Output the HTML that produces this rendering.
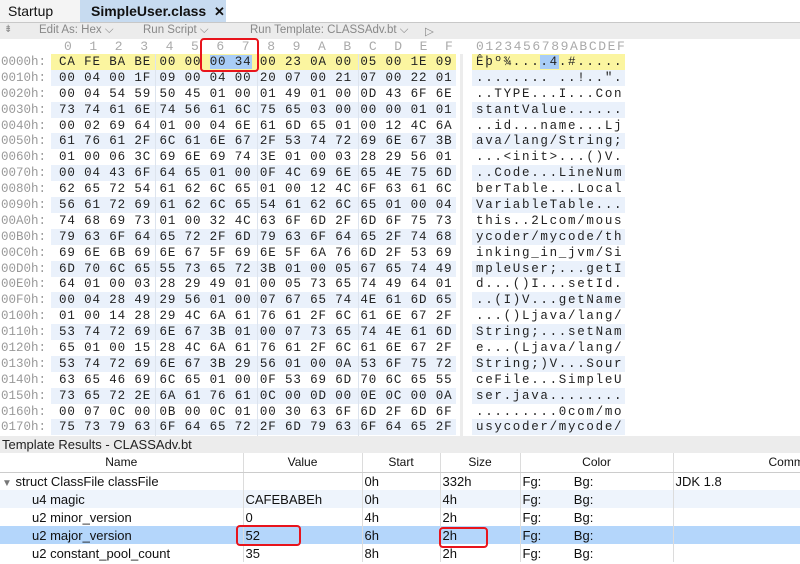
<!DOCTYPE html><html><head><meta charset="utf-8"><style>
*{margin:0;padding:0;box-sizing:border-box}
body{width:800px;height:564px;overflow:hidden;background:#fff;font-family:"Liberation Sans",sans-serif;font-size:13px;color:#111;position:relative}
.abs{position:absolute}
.tb{top:22px;left:0;width:800px;height:17px;background:#ececec;border-top:1px solid #c8c8c8;color:#888;font-size:11.5px}
.tb span{position:absolute;top:1px}
.hdr{position:absolute;top:39px;height:15px;color:#aaa;font-family:"Liberation Mono",monospace;font-size:13px;white-space:pre}
#hex div{height:15.9px;line-height:16px;font-family:"Liberation Mono",monospace;font-size:12.5px;white-space:pre;position:relative}
#hex .a{position:absolute;left:0;width:46px;text-align:right;color:#999}
#hex .h{position:absolute;left:51px;width:405px;padding-left:8px;letter-spacing:0.87px;color:#222}
#hex .s{position:absolute;left:472px;width:153px;padding-left:4px;letter-spacing:1.7px;color:#222;overflow:hidden}
.o .h,.o .s{background:#eaf1fb}
.y .h,.y .s{background:#fbf5a0}
.sel{background:#a9cdf7}
.vl{position:absolute;top:54px;width:1px;height:383px;background:#dde4ee}
table{border-collapse:collapse;position:absolute;left:0;top:453px;width:830px;table-layout:fixed}
td{height:18px;font-size:13px;padding:0 2px;border-right:1px solid #dcdcdc;white-space:nowrap;overflow:hidden}
th{height:19px;font-weight:normal;font-size:12px;border-right:1px solid #dcdcdc;border-bottom:1px solid #ccc;background:#fff}
.red{position:absolute;border:2.5px solid #e8141c;border-radius:4px}
</style></head><body>
<div class="abs" style="left:0;top:0;width:80px;height:22px;background:#f4f4f4;padding:3px 0 0 8px;font-size:14px">Startup</div>
<div class="abs" style="left:80px;top:0;width:146px;height:22px;background:#c7dbf0;padding:3px 0 0 11px;font-size:14px;font-weight:bold;white-space:nowrap">SimpleUser.class&nbsp;&nbsp;<span style="font-size:13px">✕</span></div>
<div class="abs tb">
 <span style="left:4px;font-size:10px">⇟</span>
 <span style="left:39px">Edit As: Hex ⌵</span>
 <span style="left:143px">Run Script ⌵</span>
 <span style="left:250px">Run Template: CLASSAdv.bt ⌵</span>
 <span style="left:425px">▷</span>
</div>
<div class="hdr" style="left:64px;letter-spacing:17.6px">0123456789ABCDEF</div>
<div class="hdr" style="left:476px;letter-spacing:1.6px">0123456789ABCDEF</div>
<div id="hex" class="abs" style="left:0;top:54px;width:800px">
<div class="y"><span class="a">0000h:</span><span class="h">CA FE BA BE 00 00 <span class="sel">00 34</span> 00 23 0A 00 05 00 1E 09</span><span class="s">Êþº¾...<span class="sel">.4</span>.#......</span></div>
<div class="o"><span class="a">0010h:</span><span class="h">00 04 00 1F 09 00 04 00 20 07 00 21 07 00 22 01</span><span class="s">........ ..!..".</span></div>
<div><span class="a">0020h:</span><span class="h">00 04 54 59 50 45 01 00 01 49 01 00 0D 43 6F 6E</span><span class="s">..TYPE...I...Con</span></div>
<div class="o"><span class="a">0030h:</span><span class="h">73 74 61 6E 74 56 61 6C 75 65 03 00 00 00 01 01</span><span class="s">stantValue......</span></div>
<div><span class="a">0040h:</span><span class="h">00 02 69 64 01 00 04 6E 61 6D 65 01 00 12 4C 6A</span><span class="s">..id...name...Lj</span></div>
<div class="o"><span class="a">0050h:</span><span class="h">61 76 61 2F 6C 61 6E 67 2F 53 74 72 69 6E 67 3B</span><span class="s">ava/lang/String;</span></div>
<div><span class="a">0060h:</span><span class="h">01 00 06 3C 69 6E 69 74 3E 01 00 03 28 29 56 01</span><span class="s">...&lt;init&gt;...()V.</span></div>
<div class="o"><span class="a">0070h:</span><span class="h">00 04 43 6F 64 65 01 00 0F 4C 69 6E 65 4E 75 6D</span><span class="s">..Code...LineNum</span></div>
<div><span class="a">0080h:</span><span class="h">62 65 72 54 61 62 6C 65 01 00 12 4C 6F 63 61 6C</span><span class="s">berTable...Local</span></div>
<div class="o"><span class="a">0090h:</span><span class="h">56 61 72 69 61 62 6C 65 54 61 62 6C 65 01 00 04</span><span class="s">VariableTable...</span></div>
<div><span class="a">00A0h:</span><span class="h">74 68 69 73 01 00 32 4C 63 6F 6D 2F 6D 6F 75 73</span><span class="s">this..2Lcom/mous</span></div>
<div class="o"><span class="a">00B0h:</span><span class="h">79 63 6F 64 65 72 2F 6D 79 63 6F 64 65 2F 74 68</span><span class="s">ycoder/mycode/th</span></div>
<div><span class="a">00C0h:</span><span class="h">69 6E 6B 69 6E 67 5F 69 6E 5F 6A 76 6D 2F 53 69</span><span class="s">inking_in_jvm/Si</span></div>
<div class="o"><span class="a">00D0h:</span><span class="h">6D 70 6C 65 55 73 65 72 3B 01 00 05 67 65 74 49</span><span class="s">mpleUser;...getI</span></div>
<div><span class="a">00E0h:</span><span class="h">64 01 00 03 28 29 49 01 00 05 73 65 74 49 64 01</span><span class="s">d...()I...setId.</span></div>
<div class="o"><span class="a">00F0h:</span><span class="h">00 04 28 49 29 56 01 00 07 67 65 74 4E 61 6D 65</span><span class="s">..(I)V...getName</span></div>
<div><span class="a">0100h:</span><span class="h">01 00 14 28 29 4C 6A 61 76 61 2F 6C 61 6E 67 2F</span><span class="s">...()Ljava/lang/</span></div>
<div class="o"><span class="a">0110h:</span><span class="h">53 74 72 69 6E 67 3B 01 00 07 73 65 74 4E 61 6D</span><span class="s">String;...setNam</span></div>
<div><span class="a">0120h:</span><span class="h">65 01 00 15 28 4C 6A 61 76 61 2F 6C 61 6E 67 2F</span><span class="s">e...(Ljava/lang/</span></div>
<div class="o"><span class="a">0130h:</span><span class="h">53 74 72 69 6E 67 3B 29 56 01 00 0A 53 6F 75 72</span><span class="s">String;)V...Sour</span></div>
<div><span class="a">0140h:</span><span class="h">63 65 46 69 6C 65 01 00 0F 53 69 6D 70 6C 65 55</span><span class="s">ceFile...SimpleU</span></div>
<div class="o"><span class="a">0150h:</span><span class="h">73 65 72 2E 6A 61 76 61 0C 00 0D 00 0E 0C 00 0A</span><span class="s">ser.java........</span></div>
<div><span class="a">0160h:</span><span class="h">00 07 0C 00 0B 00 0C 01 00 30 63 6F 6D 2F 6D 6F</span><span class="s">.........0com/mo</span></div>
<div class="o"><span class="a">0170h:</span><span class="h">75 73 79 63 6F 64 65 72 2F 6D 79 63 6F 64 65 2F</span><span class="s">usycoder/mycode/</span></div>
</div>
<div class="vl" style="left:155px"></div><div class="vl" style="left:257px"></div><div class="vl" style="left:358px"></div>
<div class="abs" style="left:460px;top:54px;width:3px;height:383px;background:#ececec"></div>
<div class="abs" style="left:0;top:436px;width:800px;height:17px;background:#ececec;padding:1px 0 0 2px;font-size:13px;color:#222">Template Results - CLASSAdv.bt</div>
<table>
<colgroup><col style="width:243px"><col style="width:119px"><col style="width:78px"><col style="width:80px"><col style="width:153px"><col style="width:157px"></colgroup>
<tr><th>Name</th><th>Value</th><th>Start</th><th>Size</th><th>Color</th><th style="text-align:left;padding-left:95px">Comm</th></tr>
<tr><td><span style="color:#777;font-size:10px">▼</span> struct ClassFile classFile</td><td></td><td>0h</td><td>332h</td><td>Fg:&nbsp;&nbsp;&nbsp;&nbsp;&nbsp;&nbsp;&nbsp;&nbsp;&nbsp;Bg:</td><td>JDK 1.8</td></tr>
<tr style="background:#eef4fc"><td style="padding-left:32px">u4 magic</td><td>CAFEBABEh</td><td>0h</td><td>4h</td><td>Fg:&nbsp;&nbsp;&nbsp;&nbsp;&nbsp;&nbsp;&nbsp;&nbsp;&nbsp;Bg:</td><td></td></tr>
<tr><td style="padding-left:32px">u2 minor_version</td><td>0</td><td>4h</td><td>2h</td><td>Fg:&nbsp;&nbsp;&nbsp;&nbsp;&nbsp;&nbsp;&nbsp;&nbsp;&nbsp;Bg:</td><td></td></tr>
<tr style="background:#b4d6fb"><td style="padding-left:32px">u2 major_version</td><td>52</td><td>6h</td><td>2h</td><td>Fg:&nbsp;&nbsp;&nbsp;&nbsp;&nbsp;&nbsp;&nbsp;&nbsp;&nbsp;Bg:</td><td></td></tr>
<tr><td style="padding-left:32px">u2 constant_pool_count</td><td>35</td><td>8h</td><td>2h</td><td>Fg:&nbsp;&nbsp;&nbsp;&nbsp;&nbsp;&nbsp;&nbsp;&nbsp;&nbsp;Bg:</td><td></td></tr>
</table>
<div class="red" style="left:200px;top:38px;width:59px;height:34px"></div>
<div class="red" style="left:236px;top:525px;width:65px;height:21px"></div>
<div class="red" style="left:439px;top:527px;width:49px;height:21px"></div>
</body></html>
